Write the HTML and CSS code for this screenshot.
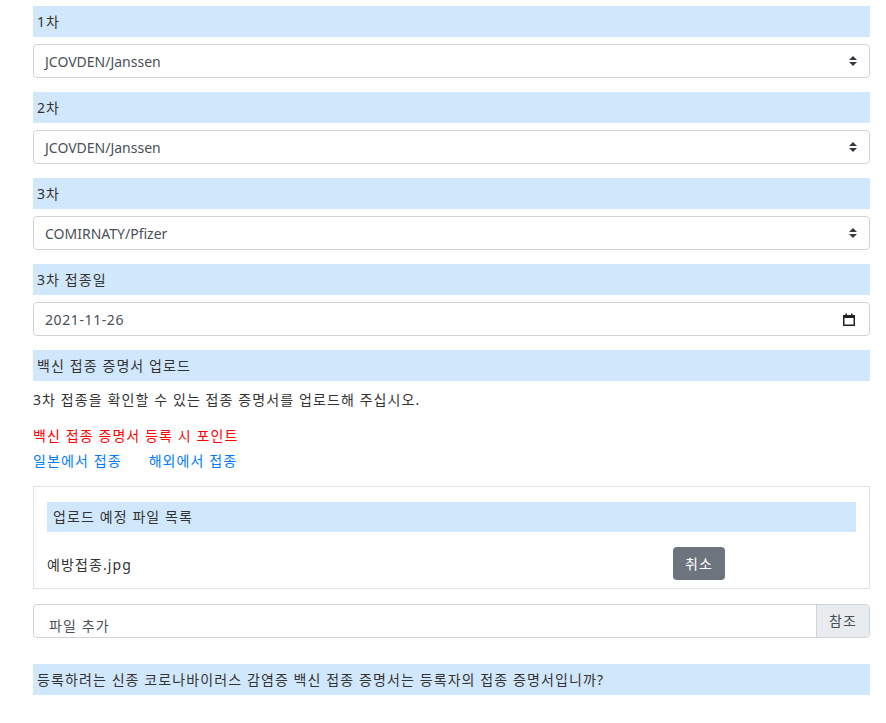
FILE: index.html
```html
<!DOCTYPE html>
<html lang="ko">
<head>
<meta charset="utf-8">
<link rel="stylesheet" href="styles.css">
</head>
<body>
<div class="page">
  <div class="label ko">1차</div>
  <div class="field">
    <span>JCOVDEN/Janssen</span>
    <svg class="arrows" width="8" height="10" viewBox="0 0 4 5"><path d="M2 0L0 2h4zm0 5L0 3h4z" fill="#343a40"/></svg>
  </div>
  <div class="label ko">2차</div>
  <div class="field">
    <span>JCOVDEN/Janssen</span>
    <svg class="arrows" width="8" height="10" viewBox="0 0 4 5"><path d="M2 0L0 2h4zm0 5L0 3h4z" fill="#343a40"/></svg>
  </div>
  <div class="label ko">3차</div>
  <div class="field">
    <span>COMIRNATY/Pfizer</span>
    <svg class="arrows" width="8" height="10" viewBox="0 0 4 5"><path d="M2 0L0 2h4zm0 5L0 3h4z" fill="#343a40"/></svg>
  </div>
  <div class="label ko">3차 접종일</div>
  <div class="field date">
    <span class="datetext">2021-11-26</span>
    <svg class="cal" width="12" height="13" viewBox="0 0 12 13"><rect x="0.75" y="2.75" width="10.5" height="9.5" fill="none" stroke="#222" stroke-width="1.5"/><rect x="0" y="2" width="12" height="3" fill="#222"/><rect x="2.5" y="0.5" width="1.5" height="2" fill="#222"/><rect x="8" y="0.5" width="1.5" height="2" fill="#222"/></svg>
  </div>
  <div class="label ko">백신 접종 증명서 업로드</div>
  <p class="desc ko">3차 접종을 확인할 수 있는 접종 증명서를 업로드해 주십시오.</p>
  <div class="red ko">백신 접종 증명서 등록 시 포인트</div>
  <div class="links ko"><span class="link">일본에서 접종</span><span class="link">해외에서 접종</span></div>
  <div class="box">
    <div class="label inner ko">업로드 예정 파일 목록</div>
    <div class="filerow">
      <span class="fname ko">예방접종.jpg</span>
      <span class="btn ko">취소</span>
    </div>
  </div>
  <div class="fileinput">
    <span class="ftext ko">파일 추가</span>
    <span class="browse ko">참조</span>
  </div>
  <div class="label last ko">등록하려는 신종 코로나바이러스 감염증 백신 접종 증명서는 등록자의 접종 증명서입니까?</div>
</div>
</body>
</html>
```
FILE: styles.css
```css
html, body {
  margin: 0;
  padding: 0;
  background: #fff;
}
body {
  font-family: "Noto Sans", "Noto Sans CJK KR", sans-serif;
  font-size: 14px;
  color: #333;
}
.ko {
  letter-spacing: 1.1px;
}
.page {
  width: 837px;
  margin-left: 33px;
  padding-top: 6px;
}
.label {
  height: 31px;
  line-height: 31px;
  padding: 0 4px;
  background: #d1e7fb;
  color: #333;
  margin-bottom: 7px;
}
.field {
  height: 34px;
  box-sizing: border-box;
  border: 1px solid #ced4da;
  border-radius: 4px;
  padding: 0 12px 0 11px;
  display: flex;
  align-items: center;
  justify-content: space-between;
  color: #495057;
  margin-bottom: 14px;
}
.datetext {
  letter-spacing: 0.6px;
}
.cal {
  margin-right: 2px;
}
.desc {
  margin: 8px 0 14px 0;
  line-height: 21px;
}
.red {
  color: #ff0000;
  line-height: 24px;
}
.links {
  display: flex;
  gap: 27px;
  line-height: 26px;
  margin-bottom: 12px;
}
.link {
  color: #007bff;
}
.box {
  border: 1px solid #dee2e6;
  padding: 15px 13px 8px 13px;
  margin-bottom: 15px;
}
.label.inner {
  height: 30px;
  line-height: 30px;
  padding: 0 6px;
  margin-bottom: 15px;
}
.filerow {
  display: grid;
  grid-template-columns: 626px auto;
  align-items: center;
}
.fname {
  color: #333;
}
.btn {
  justify-self: start;
  height: 33px;
  line-height: 33px;
  padding: 0 12px;
  border-radius: 4px;
  background: #6c757d;
  color: #fff;
}
.fileinput {
  height: 34px;
  box-sizing: border-box;
  border: 1px solid #ced4da;
  border-radius: 4px;
  display: flex;
  margin-bottom: 26px;
  overflow: hidden;
}
.ftext {
  flex: 1;
  padding: 9px 15px 0 15px;
  line-height: 24px;
  color: #495057;
}
.browse {
  width: 52px;
  border-left: 1px solid #ced4da;
  background: #e9ecef;
  color: #495057;
  text-align: center;
  line-height: 32px;
}
.label.last {
  margin-bottom: 0;
}
```
